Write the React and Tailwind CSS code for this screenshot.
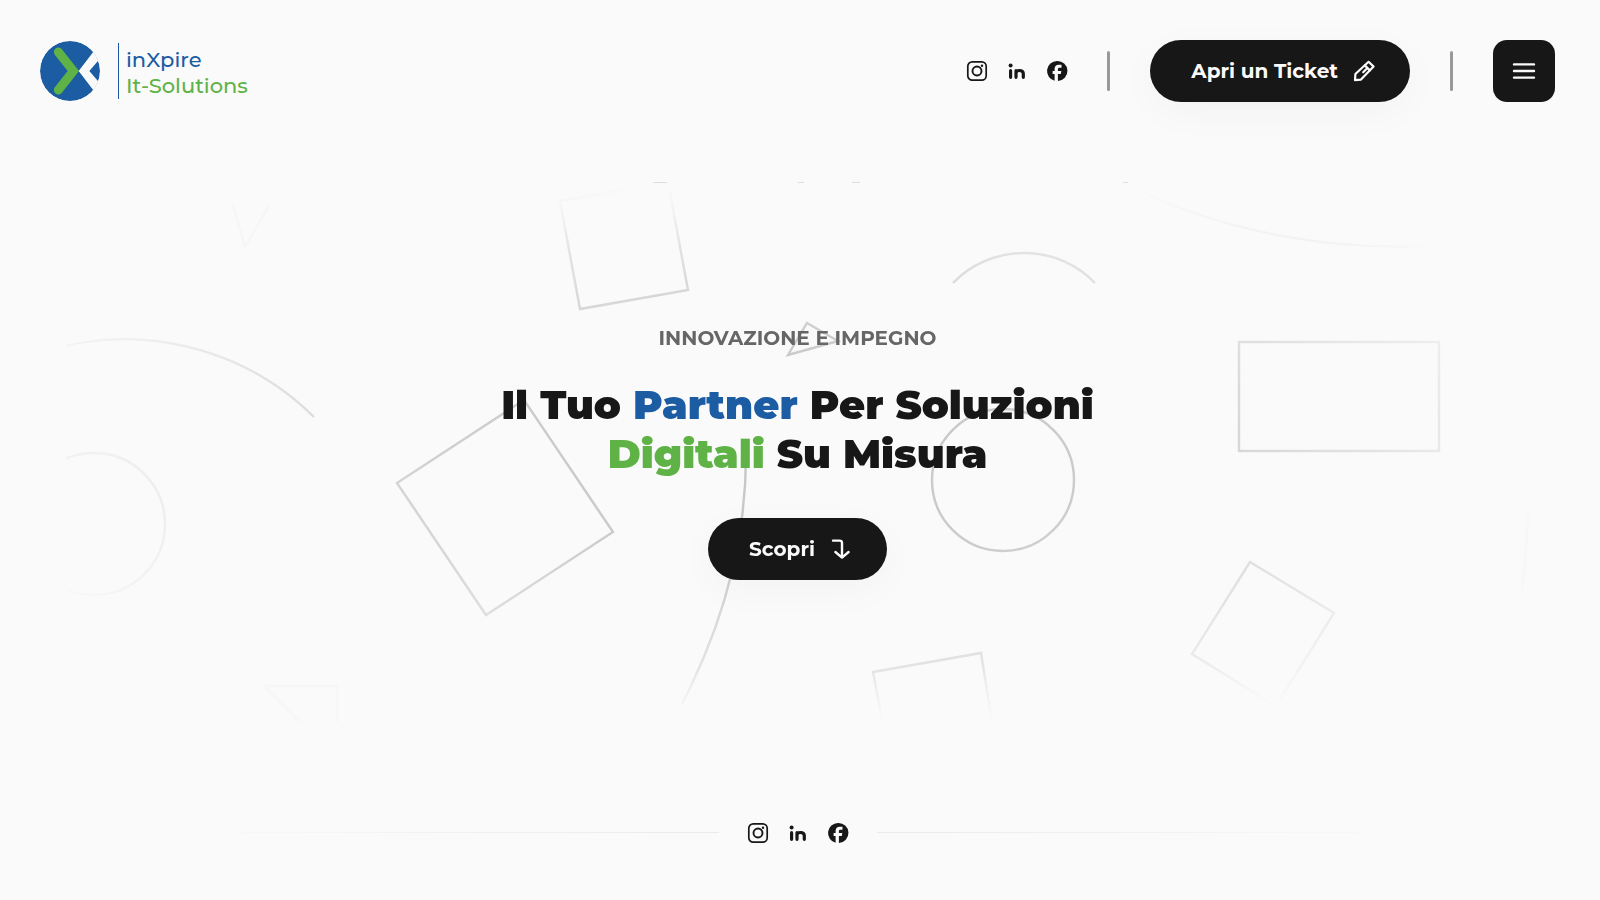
const ink = "text-[#171717]";

function LogoMark() {
  return (
    <svg viewBox="60 63 180 180" className="size-15" aria-hidden="true">
      <defs>
        <clipPath id="logo-disc">
          <circle cx="150" cy="153" r="90" />
        </clipPath>
      </defs>
      <g clipPath="url(#logo-disc)">
        <circle cx="150" cy="153" r="90" fill="#1b5ca3" />
        <path d="M176 153L219 97L225 88L245 88L237 119L208 153L237 187L245 218H225L219 209Z" fill="#fafafa" />
      </g>
      <path d="M115 96L160 153L115 210" fill="none" stroke="#5fb346" strokeWidth="27" strokeLinecap="round" strokeLinejoin="miter" />
    </svg>
  );
}

function InstagramIcon() {
  return (
    <svg viewBox="0 0 24 24" className="size-6" fill="none" stroke="currentColor" aria-hidden="true">
      <rect x="2.8" y="2.8" width="18.4" height="18.4" rx="4.4" strokeWidth="1.7" />
      <circle cx="12" cy="12" r="4.5" strokeWidth="1.9" />
      <circle cx="17" cy="6.8" r="1.2" fill="currentColor" stroke="none" />
    </svg>
  );
}

function LinkedinIcon() {
  return (
    <svg viewBox="0 0 24 24" className="size-6" fill="none" stroke="currentColor" strokeLinecap="round" aria-hidden="true">
      <circle cx="5.6" cy="6.6" r="2" fill="currentColor" stroke="none" />
      <path d="M5.6 11.7V18.3M11 18.3V11.7M11 14.2C11 12.3 12.2 11.5 14.4 11.5S18.3 12.6 18.3 14.6V18.3" strokeWidth="3.2" />
    </svg>
  );
}

function FacebookIcon() {
  return (
    <svg viewBox="0 0 24 24" className="size-6" fill="currentColor" aria-hidden="true">
      <path d="M12 2a10 10 0 0 0-2.4 19.7V15H7.6v-3h2V10c0-2.9 1.6-4.3 4.1-4.3h2.8v3h-1.9c-1.3 0-1.7.5-1.7 1.5V12h3.4l-.5 3h-2.9v7A10 10 0 0 0 12 2Z" />
    </svg>
  );
}

function SocialLinks() {
  return (
    <div className={`flex items-center gap-4 ${ink}`}>
      <a href="#instagram" aria-label="Instagram"><InstagramIcon /></a>
      <a href="#linkedin" aria-label="LinkedIn"><LinkedinIcon /></a>
      <a href="#facebook" aria-label="Facebook"><FacebookIcon /></a>
    </div>
  );
}

function PencilIcon() {
  return (
    <svg viewBox="0 0 24 24" className="size-6" fill="none" stroke="currentColor" strokeWidth="2.2" strokeLinejoin="round" strokeLinecap="round" aria-hidden="true">
      <path d="M3 21.2L3.4 15L16.6 2.8L21.6 7.6L9 20.6Z" />
      <path d="M12.8 6.4L17.8 11.4M14.6 9.8L11.2 13.2" />
    </svg>
  );
}

function ArrowIcon() {
  return (
    <svg viewBox="0 0 24 24" className="size-6" fill="none" stroke="currentColor" strokeWidth="2.4" strokeLinejoin="round" strokeLinecap="round" aria-hidden="true">
      <path d="M4 3.6H10.6Q13 3.6 13 6V20.4M6.4 15L13 20.6L19.6 15" />
    </svg>
  );
}

function PillButton({ children, icon }) {
  return (
    <button
      type="button"
      className="flex h-[62px] cursor-pointer items-center gap-[14px] rounded-full bg-[#171717] pl-[41px] pr-[34px] text-[20px] leading-6 font-bold text-[#fafafa] shadow-[0_10px_40px_rgba(0,0,0,0.03)]"
    >
      {children}
      {icon}
    </button>
  );
}

function Shapes() {
  return (
    <svg
      viewBox="40 182 1515 541"
      preserveAspectRatio="xMidYMid slice"
      className="absolute inset-0 size-full"
      fill="none"
      stroke="#c6c6c6"
      strokeWidth="2.4"
      aria-hidden="true"
    >
      <defs>
        <radialGradient id="fade" gradientUnits="userSpaceOnUse" cx="0" cy="0" r="1" gradientTransform="translate(797 453) scale(850 320)">
          <stop offset="0" stopColor="#fff" />
          <stop offset="0.35" stopColor="#fff" stopOpacity="0.9" />
          <stop offset="1" stopColor="#fff" stopOpacity="0" />
        </radialGradient>
        <linearGradient id="edge" x1="0" y1="0" x2="0" y2="1">
          <stop offset="0" stopColor="#fff" stopOpacity="0" />
          <stop offset="0.12" stopColor="#fff" />
          <stop offset="0.9" stopColor="#fff" />
          <stop offset="1" stopColor="#fff" stopOpacity="0" />
        </linearGradient>
        <mask id="edge-mask" maskUnits="userSpaceOnUse" x="40" y="182" width="1515" height="541">
          <rect x="40" y="182" width="1515" height="541" fill="url(#edge)" stroke="none" />
        </mask>
        <mask id="fade-mask" maskUnits="userSpaceOnUse" x="40" y="182" width="1515" height="541">
          <rect x="66" y="182" width="1424" height="541" fill="url(#fade)" stroke="none" />
        </mask>
      </defs>
      <g mask="url(#edge-mask)">
        <g mask="url(#fade-mask)">
          <path d="M560 201L668 182L688 290L580 309Z" />
          <path d="M953 283A99 99 0 0 1 1095 283" />
          <path d="M807 323L838 341L788 355Z" />
          <path d="M397 483L524 400L613 532L486 615Z" />
          <path d="M746 455Q746 580 682 704" />
          <circle cx="1003" cy="480" r="71" />
          <rect x="1239" y="342" width="200" height="109" />
          <path d="M1250 562L1334 613L1276 706L1192 654Z" />
          <path d="M886 740L873 672L981 653L995 740" />
          <path d="M40 353A269 269 0 0 1 314 417" />
          <circle cx="94" cy="524" r="71" opacity="0.7" />
          <path d="M1120 182A624 624 0 0 0 1555 226" />
        </g>
      </g>
      <path d="M233 204L245 247L270 204" stroke="#f6f6f6" />
      <path d="M300 722L264 686H337V722" stroke="#f7f7f7" />
      <path d="M1528 512Q1526 560 1522 590" stroke="#f7f7f7" />
      <path d="M653 182.5H667M798 182.5H804M852 182.5H860M1123 182.5H1128" stroke="#dedede" strokeWidth="1" />
    </svg>
  );
}

export default function App() {
  return (
    <div className="flex min-h-screen flex-col bg-[#fafafa] font-['Montserrat','Inter',sans-serif]">
      <header className="flex items-center justify-between pt-10 pr-[45px] pb-10 pl-10">
        <a href="#home" className="flex items-center">
          <LogoMark />
          <span className="ml-[18px] h-14 w-px bg-[#1b5ca3]" />
          <span className="ml-[7px] flex flex-col pt-1 text-[21px] leading-[26px] font-medium">
            <span className="text-[#1b5ca3]">inXpire</span>
            <span className="text-[#5fb346]">It-Solutions</span>
          </span>
        </a>
        <div className="flex items-center gap-10">
          <div className="-mr-0.5">
            <SocialLinks />
          </div>
          <span className="h-10 w-[3px] rounded-full bg-[#999999]" />
          <PillButton icon={<PencilIcon />}>Apri un Ticket</PillButton>
          <span className="h-10 w-[3px] rounded-full bg-[#999999]" />
          <button
            type="button"
            aria-label="Menu"
            className="flex size-[62px] cursor-pointer items-center justify-center rounded-[14px] bg-[#171717]"
          >
            <svg viewBox="0 0 24 24" className="size-6" stroke="#fafafa" strokeWidth="2.4" strokeLinecap="round" aria-hidden="true">
              <path d="M2 5.4H22M2 12H22M2 18.6H22" />
            </svg>
          </button>
        </div>
      </header>

      <main className="flex grow py-10 pr-[45px] pl-10">
        <section className="relative flex grow items-center justify-center">
          <Shapes />
          <div className="relative flex flex-col items-center text-center">
            <p className="text-[20px] leading-[25px] font-bold text-[#666666] uppercase">Innovazione e impegno</p>
            <h1 className={`mt-[29px] text-[40px] leading-[49px] font-black ${ink}`}>
              Il Tuo <span className="text-[#1b5ca3]">Partner</span> Per Soluzioni
              <br />
              <span className="text-[#5fb346]">Digitali</span> Su Misura
            </h1>
            <div className="mt-10">
              <PillButton icon={<ArrowIcon />}>Scopri</PillButton>
            </div>
          </div>
        </section>
      </main>

      <footer className="flex h-[137px] items-center justify-center gap-[27px] pt-0.5 pr-[45px] pl-10">
        <span className="h-px max-w-[483px] grow bg-linear-to-l from-[#ebebeb] via-[#f1f1f1] to-[#f8f8f8]" />
        <SocialLinks />
        <span className="h-px max-w-[483px] grow bg-linear-to-r from-[#ebebeb] via-[#f1f1f1] to-[#f8f8f8]" />
      </footer>
    </div>
  );
}
